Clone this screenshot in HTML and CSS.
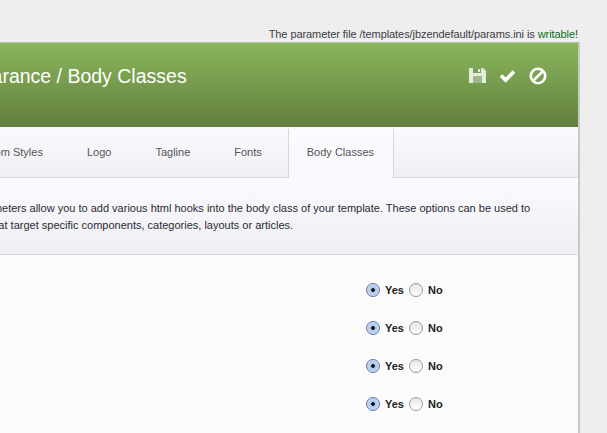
FILE: index.html
```html
<!DOCTYPE html>
<html lang="en">
<head>
<meta charset="utf-8">
<title>Appearance / Body Classes</title>
<link rel="stylesheet" href="styles.css">
</head>
<body>
<p class="notice">The parameter file /templates/jbzendefault/params.ini is <span class="ok">writable</span>!</p>
<main class="panel">
  <header class="head">
    <h1 class="title">Appearance / Body Classes</h1>
    <div class="actions">
      <svg class="icon" width="17" height="17" viewBox="0 0 17 17"><path fill="#e4ecdb" d="M0 1h14l3 3v12H0z"/><path fill="#7d9f57" d="M4 1h8v5H4z"/><path fill="#e4ecdb" d="M9 2h2v3H9z"/><path fill="#9db98a" d="M4 9h9v7H4z"/></svg>
      <svg class="icon" width="17" height="17" viewBox="0 0 17 17"><path fill="none" stroke="#fff" stroke-width="3.6" d="M2 8.5l4.6 4.6L15 4.6"/></svg>
      <svg class="icon" width="18" height="18" viewBox="0 0 18 18"><circle cx="9" cy="9" r="7.2" fill="none" stroke="#fff" stroke-width="2.6"/><path stroke="#fff" stroke-width="2.6" d="M4 14L14 4"/></svg>
    </div>
  </header>
  <nav class="tabs">
    <a class="tab">Custom Styles</a>
    <a class="tab">Logo</a>
    <a class="tab">Tagline</a>
    <a class="tab tab-last">Fonts</a>
    <a class="tab tab-active">Body Classes</a>
  </nav>
  <section class="intro">
    <p>The following parameters allow you to add various html hooks into the body class of your template. These options can be used to<br>create CSS rules that target specific components, categories, layouts or articles.</p>
  </section>
  <section class="rows">
    <div class="row"><span class="radio on"></span><b>Yes</b><span class="radio"></span><b>No</b></div>
    <div class="row"><span class="radio on"></span><b>Yes</b><span class="radio"></span><b>No</b></div>
    <div class="row"><span class="radio on"></span><b>Yes</b><span class="radio"></span><b>No</b></div>
    <div class="row"><span class="radio on"></span><b>Yes</b><span class="radio"></span><b>No</b></div>
  </section>
</main>
</body>
</html>
```
FILE: styles.css
```css
* { box-sizing: border-box; }
html, body { margin: 0; height: 100%; overflow: hidden; }
body { background: #eeeeee; font-family: "Liberation Sans", Arial, sans-serif; font-size: 11px; color: #333; }
.notice { margin: 0; height: 42px; padding: 28px 29px 0 0; text-align: right; line-height: 13px; color: #3c3c46; letter-spacing: -0.075px; }
.ok { color: #0a6e1a; }
.panel { width: 780px; margin-left: -200px; border-right: 2px solid #c8c8c8; border-top: 1px solid #bbb; background: #fbfbfb; height: 391px; overflow: hidden; }
.head { height: 84px; padding: 0 31px 0 0; display: flex; justify-content: space-between; align-items: flex-start; background: linear-gradient(#8ab65c, #627f3e); }
.title { margin: 22px 0 0 0; padding-left: 146px; font-size: 19.5px; font-weight: normal; line-height: 22px; color: #fff; white-space: nowrap; }
.actions { display: flex; gap: 13px; margin-top: 24px; }
.tabs { display: flex; height: 51px; padding: 2px 0 0 150px; border-bottom: 1px solid #d8d8dc; background: linear-gradient(#fbfbff, #eeeff3); }
.tab { height: 48px; padding: 17px 22px 0; line-height: 13px; color: #555; }
.tab-last { padding-right: 26px; }
.tab-active { height: 49px; padding: 17px 19px 0 18px; background: linear-gradient(#fbfbff, #f7f8fc); border-left: 1px solid #d8d8dc; border-right: 1px solid #d8d8dc; }
.intro { height: 77px; padding: 22px 0 0 103px; border-bottom: 1px solid #d8d8dc; background: linear-gradient(#fbfbff, #eeeff3); color: #2a2a33; }
.intro p { margin: 0; line-height: 17px; white-space: nowrap; }
.rows { padding: 16px 0 0 566px; }
.row { display: flex; align-items: center; height: 38px; color: #222; }
.row b { margin-left: 5px; }
.row b:nth-of-type(1) { width: 24px; }
.radio { width: 14px; height: 14px; border-radius: 50%; border: 1px solid #999; background: linear-gradient(#e6e6e6, #fff); }
.on { border-color: #6a6fa8; background: radial-gradient(circle, #111 0 1.5px, #a9c8ee 2.2px, #c6daf3 70%, #8fa8d8 100%); }
```
